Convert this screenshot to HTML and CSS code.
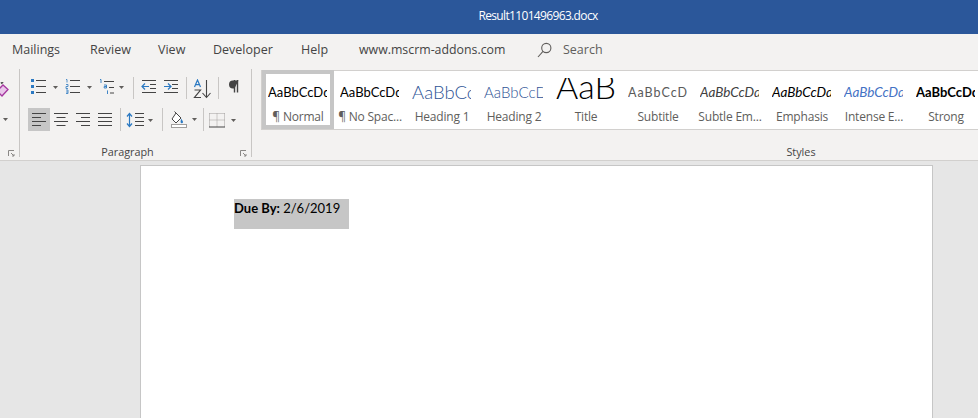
FILE: index.html
```html
<!DOCTYPE html>
<html lang="en">
<head>
<meta charset="utf-8">
<title>Result1101496963.docx</title>
<link rel="stylesheet" href="styles.css">
</head>
<body>
<header class="titlebar">Result1101496963.docx</header>
<nav class="tabs">
  <span class="tab t-mail">Mailings</span>
  <span class="tab t-rev">Review</span>
  <span class="tab t-view">View</span>
  <span class="tab t-dev">Developer</span>
  <span class="tab t-help">Help</span>
  <span class="tab t-web">www.mscrm-addons.com</span>
  <span class="search">
    <svg width="15" height="16" viewBox="0 0 15 16" fill="none" stroke="#605e5c" stroke-width="1.1"><circle cx="9.3" cy="6" r="4.6"/><path d="M6 9.4 1 15"/></svg>
    <span>Search</span>
  </span>
</nav>
<section class="ribbon">
  <div class="group stub">
    <svg class="eraser" width="9" height="15" viewBox="0 0 9 15" fill="none"><path d="M-3 9 3 3l5 4.500-6 6.500z" fill="#e9c6ea" stroke="#a5379f" stroke-width="1.300"/><path d="M1 1.500 3 0" stroke="#555" stroke-width="2"/></svg>
    <svg class="stub-caret" width="5" height="3" viewBox="0 0 5 3"><path d="M0 0h5L2.500 3z" fill="#605e5c"/></svg>
    <svg class="launch stub-launch" width="7" height="7" viewBox="0 0 7 7" fill="none" stroke="#8a8886"><path d="M.5 6V.5H6"/><path d="M3 3l3 3M6 4v2H4"/></svg>
  </div>
  <div class="group para">
    <div class="row r1">
      <svg class="i28" width="28" height="15" viewBox="0 0 28 15"><g fill="#2b79c2"><rect x="0" y="0" width="3" height="3"/><rect x="0" y="6" width="3" height="3"/><rect x="0" y="12" width="3" height="3"/></g><path d="M5 1.500h10M5 7.500h10M5 13.500h10" stroke="#444" fill="none"/><path d="M22 7h5l-2.500 3z" fill="#605e5c"/></svg>
      <svg class="i28" width="28" height="15" viewBox="0 0 28 15"><path d="M1 0.500h1v3M1 5.500h2v2H1v2h2M1 11h2v3.500H1M1 13h2" stroke="#2b79c2" fill="none" stroke-width=".8"/><path d="M5 1.500h10M5 7.500h10M5 13.500h10" stroke="#444" fill="none"/><path d="M22 7h5l-2.500 3z" fill="#605e5c"/></svg>
      <svg class="i28" width="28" height="15" viewBox="0 0 28 15"><path d="M1 .5h1v3.500M5 6h2.500v3H5.200V7.500h2.300M8.500 12v3M8.500 11v.6" stroke="#2b79c2" fill="none" stroke-width=".9"/><path d="M5 2.500h10M10 8.500h5M11 14h4" stroke="#444" fill="none"/><path d="M20 7h5l-2.500 3z" fill="#605e5c"/></svg>
      <i class="sep"></i>
      <svg class="i18" width="18" height="15" viewBox="0 0 18 15"><path d="M2 7.500h7M5 4.500l-3 3 3 3" stroke="#2b79c2" fill="none" stroke-width="1.200"/><path d="M2 1.500h14M10 5.500h6M10 9.500h6M2 13.500h14" stroke="#444" fill="none"/></svg>
      <svg class="i16" width="16" height="15" viewBox="0 0 16 15"><path d="M0 7.500h7M4 4.500l3 3-3 3" stroke="#2b79c2" fill="none" stroke-width="1.200"/><path d="M0 1.500h14M8 5.500h6M8 9.500h6M0 13.500h14" stroke="#444" fill="none"/></svg>
      <i class="sep"></i>
      <svg class="i18" width="19" height="20" viewBox="0 0 19 20"><path d="M1.500 8 4.500 1l3 7M2.600 5.600h3.800" stroke="#2b79c2" fill="none" stroke-width="1.200"/><path d="M1.500 11h6L1.500 18.500h6.500" stroke="#444" fill="none" stroke-width="1.200"/><path d="M13.500 1v17M9.500 14l4 4.500 4-4.500" stroke="#444" fill="none" stroke-width="1.100"/></svg>
      <i class="sep"></i>
      <svg class="i14" width="14" height="14" viewBox="0 0 14 14"><path d="M9.500 1v12.500M12.500 1v12.500" stroke="#444" stroke-width="1.400" fill="none"/><path d="M13.500 1.500H8A4 4 0 0 0 4 5.500 4 4 0 0 0 8 9.500h1.500z" fill="#444"/></svg>
    </div>
    <div class="row r2">
      <div class="aligns">
        <span class="al active"><svg width="14" height="13" viewBox="0 0 14 13"><path d="M0 .5h14M0 4.500h9M0 8.500h14M0 12.500h9" stroke="#444" fill="none"/></svg></span>
        <span class="al"><svg width="14" height="13" viewBox="0 0 14 13"><path d="M0 .5h14M2.500 4.500h9M0 8.500h14M2.500 12.500h9" stroke="#444" fill="none"/></svg></span>
        <span class="al"><svg width="14" height="13" viewBox="0 0 14 13"><path d="M0 .5h14M5 4.500h9M0 8.500h14M5 12.500h9" stroke="#444" fill="none"/></svg></span>
        <span class="al"><svg width="14" height="13" viewBox="0 0 14 13"><path d="M0 .5h14M0 4.500h14M0 8.500h14M0 12.500h14" stroke="#444" fill="none"/></svg></span>
      </div>
      <i class="sep"></i>
      <svg class="ls" width="33" height="16" viewBox="0 0 33 16"><path d="M4.500 2v12M2 4.500l2.500-3 2.500 3M2 11.500l2.500 3 2.500-3" stroke="#2b79c2" fill="none" stroke-width="1.200"/><path d="M10 1.500h9M10 5.500h9M10 9.500h9M10 13.500h9" stroke="#444" fill="none"/><path d="M23 7h5l-2.500 3z" fill="#605e5c"/></svg>
      <i class="sep"></i>
      <svg class="shade" width="32" height="17" viewBox="0 0 32 17"><path d="M9 2 14 7l-5 5-4-4z" fill="#fff" stroke="#444"/><path d="M9 2 7.500.5" stroke="#444"/><path d="M14 7.500c1 1.500 2 2.800 2 3.500a1.200 1.200 0 0 1-2.400 0c0-.7.400-2 .4-3.500z" fill="#2b79c2"/><rect x="4.500" y="13.500" width="15" height="3" fill="#fff" stroke="#a19f9d"/><path d="M25 7h5l-2.500 3z" fill="#605e5c"/></svg>
      <i class="sep"></i>
      <svg class="bord" width="30" height="16" viewBox="0 0 30 16"><path d="M1.500 1.500h15M1.500 8h15M1.500 1.500v13M9 1.500v13M16.500 1.500v13" stroke="#a19f9d" stroke-dasharray="1 1" fill="none"/><path d="M1 15h16" stroke="#444"/><path d="M23 7h5l-2.500 3z" fill="#605e5c"/></svg>
    </div>
    <div class="group-foot para-foot">
      <span class="group-name">Paragraph</span>
      <svg class="launch" width="7" height="7" viewBox="0 0 7 7" fill="none" stroke="#8a8886"><path d="M.5 6V.5H6"/><path d="M3 3l3 3M6 4v2H4"/></svg>
    </div>
  </div>
  <div class="group styles">
    <div class="gallery">
      <div class="style selected"><div class="pv s-normal">AaBbCcDdEe</div><div class="lb">¶ Normal</div></div>
      <div class="style"><div class="pv s-normal">AaBbCcDdEe</div><div class="lb">¶ No Spac...</div></div>
      <div class="style"><div class="pv s-h1">AaBbCcDd</div><div class="lb">Heading 1</div></div>
      <div class="style"><div class="pv s-h2">AaBbCcDdEe</div><div class="lb">Heading 2</div></div>
      <div class="style"><div class="pv s-title">AaB</div><div class="lb">Title</div></div>
      <div class="style"><div class="pv s-sub">AaBbCcDdEe</div><div class="lb">Subtitle</div></div>
      <div class="style"><div class="pv s-sem">AaBbCcDdEe</div><div class="lb">Subtle Em...</div></div>
      <div class="style"><div class="pv s-em">AaBbCcDdEe</div><div class="lb">Emphasis</div></div>
      <div class="style"><div class="pv s-int">AaBbCcDdEe</div><div class="lb">Intense E...</div></div>
      <div class="style"><div class="pv s-strong">AaBbCcDdEe</div><div class="lb">Strong</div></div>
    </div>
    <div class="group-foot styles-foot"><span class="group-name">Styles</span></div>
  </div>
</section>
<main class="canvas">
  <article class="page">
    <div class="selection"><b>Due By:</b> 2/6/2019</div>
  </article>
</main>
</body>
</html>
```
FILE: styles.css
```css
html, body { margin: 0; padding: 0; height: 100%; overflow: hidden; }
body {
  width: 978px; height: 418px; display: flex; flex-direction: column;
  background: #e6e6e6; font-family: "Open Sans", "Noto Sans", sans-serif; color: #444;
}
.titlebar {
  height: 34px; flex: none; background: #2b579a; color: #fff;
  font-size: 12px; letter-spacing: -.65px; line-height: 32px; text-align: center;
  padding-left: 98px; box-sizing: border-box;
}
.tabs {
  height: 35px; flex: none; background: #f3f2f1; display: flex; align-items: center;
  padding: 3px 0 7px 12px; font-size: 12.500px; color: #444; box-sizing: border-box;
}
.tab { display: block; white-space: nowrap; }
.t-mail { width: 78px; }
.t-rev { width: 68px; }
.t-view { width: 55px; }
.t-dev { width: 88px; }
.t-help { width: 58px; }
.t-web { width: 178px; font-size: 12.350px; }
.search { display: flex; align-items: center; gap: 11px; color: #605e5c; }
.ribbon {
  height: 92px; flex: none; background: #f3f2f1; display: flex; box-sizing: border-box;
  border-bottom: 1px solid #d2d0ce;
}
.group { position: relative; display: flex; flex-direction: column; box-sizing: border-box; }
.stub { width: 20px; border-right: 1px solid #c8c6c4; height: 88px; }
.eraser { position: absolute; left: 0; top: 13px; }
.stub-caret { position: absolute; left: 3px; top: 49px; }
.stub-launch { position: absolute; left: 8px; top: 81px; }
.para { width: 232px; height: 88px; border-right: 1px solid #c8c6c4; }
.row { display: flex; }
.r1 { gap: 6px; padding: 10px 0 0 11px; height: 29px; box-sizing: border-box; align-items: flex-start; }
.r2 { gap: 4px; padding-left: 8px; height: 23px; margin-top: 10px; align-items: center; }
.sep { display: block; width: 1px; background: #c8c6c4; }
.r1 .sep { height: 22px; margin-top: -2px; }
.r2 .sep { height: 23px; }
.r1 .i18, .r1 .i16, .r1 .i14, .r1 .i28 { display: block; flex: none; }
.aligns { display: flex; }
.al { width: 22px; height: 23px; display: flex; align-items: center; justify-content: center; }
.al.active { background: #c6c6c6; }
.group-foot { position: relative; display: flex; justify-content: center; align-items: flex-start; flex: 1; }
.group-name { font-size: 10.800px; color: #444; line-height: 14px; }
.launch { display: block; }
.para-foot { padding: 14px 16px 0 0; }
.para-foot .launch { position: absolute; right: 4px; top: 19px; }
.styles { flex: 1; min-width: 0; height: 91px; overflow: hidden; }
.gallery {
  margin: 1px 0 0 9px; height: 60px; background: #fff; border: 1px solid #d2d0ce; border-right: 0;
  display: flex; box-sizing: border-box; width: 800px; flex: none;
}
.styles-foot { padding: 15px 0 0 372px; }
.style { width: 72px; flex: none; box-sizing: border-box; padding: 3px 6px 0; }
.style.selected { border: 4px solid #c6c6c6; padding: 0 2px; margin-top: -1px; height: 59px; }
.pv {
  height: 34px; width: 59px; overflow: hidden; white-space: nowrap;
  font-family: "Lato", sans-serif; font-size: 13px; line-height: 37px; color: #000;
}
.s-h1 { font-size: 18.500px; font-weight: 300; color: #2f5496; }
.s-h2 { font-size: 15px; font-weight: 300; color: #2f5496; }
.s-title { font-size: 34px; font-weight: 300; height: 30px; margin-top: 4px; line-height: 16px; }
.s-sub { font-size: 12.500px; letter-spacing: 1px; color: #5a5a5a; }
.s-sem { font-size: 13.500px; font-style: italic; color: #404040; }
.s-em { font-size: 13.500px; font-style: italic; }
.s-int { font-size: 13.500px; font-style: italic; color: #4472c4; }
.s-strong { font-weight: 700; }
.lb { font-size: 12px; letter-spacing: -.2px; line-height: 16px; color: #605e5c; white-space: nowrap; margin-top: 1px; margin-left: -6px; width: 72px; text-align: center; }
.canvas { flex: 1; min-height: 0; padding: 4px 0 0 140px; overflow: hidden; }
.page {
  width: 793px; height: 400px; background: #fff; border: 1px solid #c6c6c6; box-sizing: border-box;
  padding: 33px 0 0 93px;
}
.selection {
  width: 115px; height: 30px; background: #c6c6c6; box-sizing: border-box;
  font-family: "Lato", sans-serif; font-size: 13px; line-height: 19px; color: #000; white-space: nowrap;
}
```
